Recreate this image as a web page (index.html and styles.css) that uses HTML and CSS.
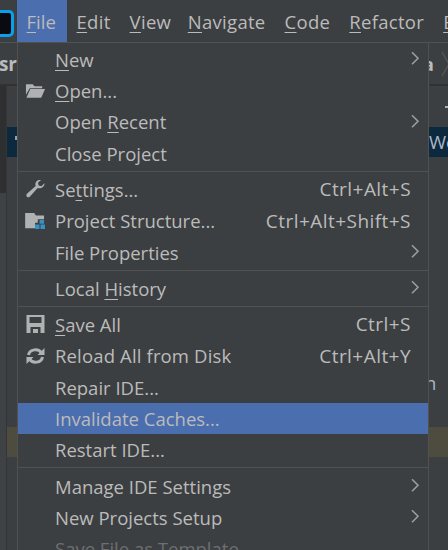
FILE: index.html
```html
<!DOCTYPE html>
<html lang="en">
<head>
<meta charset="utf-8">
<title>File menu</title>
<link rel="stylesheet" href="styles.css">
</head>
<body>
<div class="window">
  <header class="menubar">
    <div class="logo"></div>
    <nav class="menus">
      <span class="menu active"><u>F</u>ile</span>
      <span class="menu"><u>E</u>dit</span>
      <span class="menu menu-view"><u>V</u>iew</span>
      <span class="menu"><u>N</u>avigate</span>
      <span class="menu"><u>C</u>ode</span>
      <span class="menu"><u>R</u>efactor</span>
      <span class="menu"><u>B</u>uild</span>
    </nav>
  </header>
  <div class="workspace">
    <aside class="left">
      <div class="crumb crumb-left">sr</div>
      <div class="left-body">
        <div class="gutter"><div class="gutter-dark"></div></div>
        <div class="tree">
          <div class="tree-sel"><span class="tree-arrow"></span></div>
          <div class="tree-brown"></div>
        </div>
      </div>
    </aside>
    <aside class="right">
      <div class="crumb crumb-right"><span>a</span>
        <svg class="crumb-sep" width="10" height="26" viewBox="0 0 10 26"><path d="M1 1l7 12-7 12" fill="none" stroke="#555759" stroke-width="1.4"/></svg>
      </div>
      <div class="right-body">
        <div class="tree-tool"></div>
        <div class="right-sel">We</div>
        <div class="right-n">n</div>
        <div class="right-brown"></div>
      </div>
    </aside>
  </div>

  <div class="popup">
    <div class="item"><span class="label"><u>N</u>ew</span><svg class="arrow" viewBox="0 0 9 14"><path d="M1 1l6 6-6 6"/></svg></div>
    <div class="item">
      <svg class="icon" viewBox="0 0 22 18"><path fill="#afb1b3" d="M1 2h7l2 2h8v2H5L1 13z"/><path fill="#afb1b3" d="M5.500 7H21l-4 9H1.500z"/></svg>
      <span class="label"><u>O</u>pen...</span></div>
    <div class="item"><span class="label">Open <u>R</u>ecent</span><svg class="arrow" viewBox="0 0 9 14"><path d="M1 1l6 6-6 6"/></svg></div>
    <div class="item"><span class="label">Close Project</span></div>
    <div class="sep"></div>
    <div class="item">
      <svg class="icon" viewBox="0 0 22 20"><path fill="#afb1b3" d="M21 3.500l-3.500 3.400-3-.8-.8-3L17.200 0c-2.900-.7-6 1.200-6.300 4.300-.1.900 0 1.700.3 2.400L1.500 15.400c-.9.900-.9 2.300 0 3.100.9.900 2.200.9 3.100 0l8.800-9.700c3.800 1.200 8.200-1.400 7.600-5.800z"/></svg>
      <span class="label">Se<u>t</u>tings...</span><span class="keys">Ctrl+Alt+S</span></div>
    <div class="item">
      <svg class="icon" viewBox="0 0 23 20"><path fill="#afb1b3" d="M0 1h10l2 3h9v4h-7v4h-3v6H0z"/><path fill="#3592c4" d="M16 9h5v4h-5zM11 14h5v5h-5zM17 14h5v5h-5z"/></svg>
      <span class="label">Project Structure...</span><span class="keys">Ctrl+Alt+Shift+S</span></div>
    <div class="item"><span class="label">File Properties</span><svg class="arrow" viewBox="0 0 9 14"><path d="M1 1l6 6-6 6"/></svg></div>
    <div class="sep"></div>
    <div class="item"><span class="label">Local <u>H</u>istory</span><svg class="arrow" viewBox="0 0 9 14"><path d="M1 1l6 6-6 6"/></svg></div>
    <div class="sep"></div>
    <div class="item">
      <svg class="icon" viewBox="0 0 20 18"><path fill="#afb1b3" fill-rule="evenodd" d="M1 0h18v18H1zM4 2v6h12V2zM5 12v6h10v-6zM7.500 14h5v4h-5z"/></svg>
      <span class="label"><u>S</u>ave All</span><span class="keys">Ctrl+S</span></div>
    <div class="item">
      <svg class="icon" viewBox="0 0 20 18"><path fill="none" stroke="#afb1b3" stroke-width="3" d="M3 8c1-6 10-7 13-2M17 10c-1 6-10 7-13 2"/><path fill="#afb1b3" d="M19 1v7h-7zM1 17v-7h7z"/></svg>
      <span class="label label-wide">Reload All from Disk</span><span class="keys">Ctrl+Alt+Y</span></div>
    <div class="item"><span class="label">Repair IDE...</span></div>
    <div class="item selected"><span class="label">Invalidate Caches...</span></div>
    <div class="item"><span class="label">Restart IDE...</span></div>
    <div class="sep"></div>
    <div class="item"><span class="label">Manage IDE Settings</span><svg class="arrow" viewBox="0 0 9 14"><path d="M1 1l6 6-6 6"/></svg></div>
    <div class="item"><span class="label">New Projects Setup</span><svg class="arrow" viewBox="0 0 9 14"><path d="M1 1l6 6-6 6"/></svg></div>
    <div class="item disabled"><span class="label">Save File as Template...</span></div>
  </div>
</div>
</body>
</html>
```
FILE: styles.css
```css
* { box-sizing: border-box; }
html, body { margin: 0; height: 100%; overflow: hidden; }
body { background: #3c3f41; color: #bbbbbb; font-family: "Open Sans", "Noto Sans", sans-serif; font-size: 18.5px; }
u { text-underline-offset: 3px; text-decoration-thickness: 1px; }
.window { position: relative; width: 448px; height: 550px; overflow: hidden; }

.menubar { display: flex; height: 43px; border-bottom: 1px solid #515151; }
.logo { flex: none; width: 17px; overflow: hidden; }
.logo::before { content: ""; display: block; width: 17px; height: 21px; margin: 10px 0 0 -9px; background: #0a0a12; border: 3px solid #0a9fe8; border-radius: 5px; }
.menus { display: flex; }
.menu { flex: none; display: flex; align-items: center; height: 42px; padding: 0 9.5px; letter-spacing: 0.3px; white-space: nowrap; }
.menu.active { background: #4b6eaf; width: 50px; letter-spacing: 0; }
.menu-view { padding-right: 7px; }

.workspace { display: flex; justify-content: space-between; height: 507px; }
.left { width: 18px; overflow: hidden; }
.right { width: 20px; border-left: 1px solid #515151; overflow: hidden; }
.crumb { height: 43px; border-bottom: 2px solid #323232; display: flex; align-items: center; font-weight: 700; white-space: nowrap; }
.crumb-left { justify-content: flex-end; padding-right: 1px; font-size: 19px; }
.crumb-right { gap: 7px; margin-left: -6px; font-size: 18px; }
.crumb-sep { flex: none; }
.left-body { display: flex; height: 464px; }
.gutter { width: 7px; background: #3f4244; border-right: 1px solid #333537; }
.gutter-dark { height: 107px; background: #2d2f31; }
.tree { width: 10px; padding-top: 41px; }
.tree-sel { height: 30px; background: #0d293e; padding: 9px 0 0 8px; }
.tree-arrow { display: block; width: 2px; height: 4px; background: #9a9c9e; }
.tree-brown { height: 30px; margin-top: 270px; background: #4e4b3f; }
.right-body { padding-top: 20px; }
.tree-tool { width: 3px; height: 2px; margin: 0 0 19px 16px; background: #afb1b3; }
.right-sel { height: 30px; line-height: 30px; background: #0d293e; white-space: nowrap; color: #a9b7c6; }
.right-n { height: 30px; margin: 211px 0 0 -4px; line-height: 30px; color: #a9b7c6; }
.right-brown { height: 30px; margin-top: 29px; background: #4e4b3f; }

.popup { position: absolute; left: 17px; top: 43px; width: 412px; display: flex; flex-direction: column; background: #3c3f41; border-left: 1px solid #515151; border-right: 1px solid #515151; padding-top: 0.5px; }
.item { position: relative; flex: none; height: 31.4px; padding: 0 17px 0 37px; display: flex; align-items: center; justify-content: space-between; white-space: nowrap; }
.item.selected { background: #4b6eaf; }
.item.disabled { color: #6d6f71; }
.sep { flex: none; height: 3px; margin-top: 1.7px; border-top: 1px solid #515151; }
.label-wide { letter-spacing: 0.15px; }
.keys { font-size: 19px; letter-spacing: 0.45px; }
.icon { position: absolute; left: 7px; top: 50%; transform: translateY(-50%); width: 21px; height: 18px; }
.arrow { position: absolute; right: 8px; top: 50%; transform: translateY(-55%); width: 9px; height: 14px; fill: none; stroke: #9a9c9e; stroke-width: 1.6; }
```
